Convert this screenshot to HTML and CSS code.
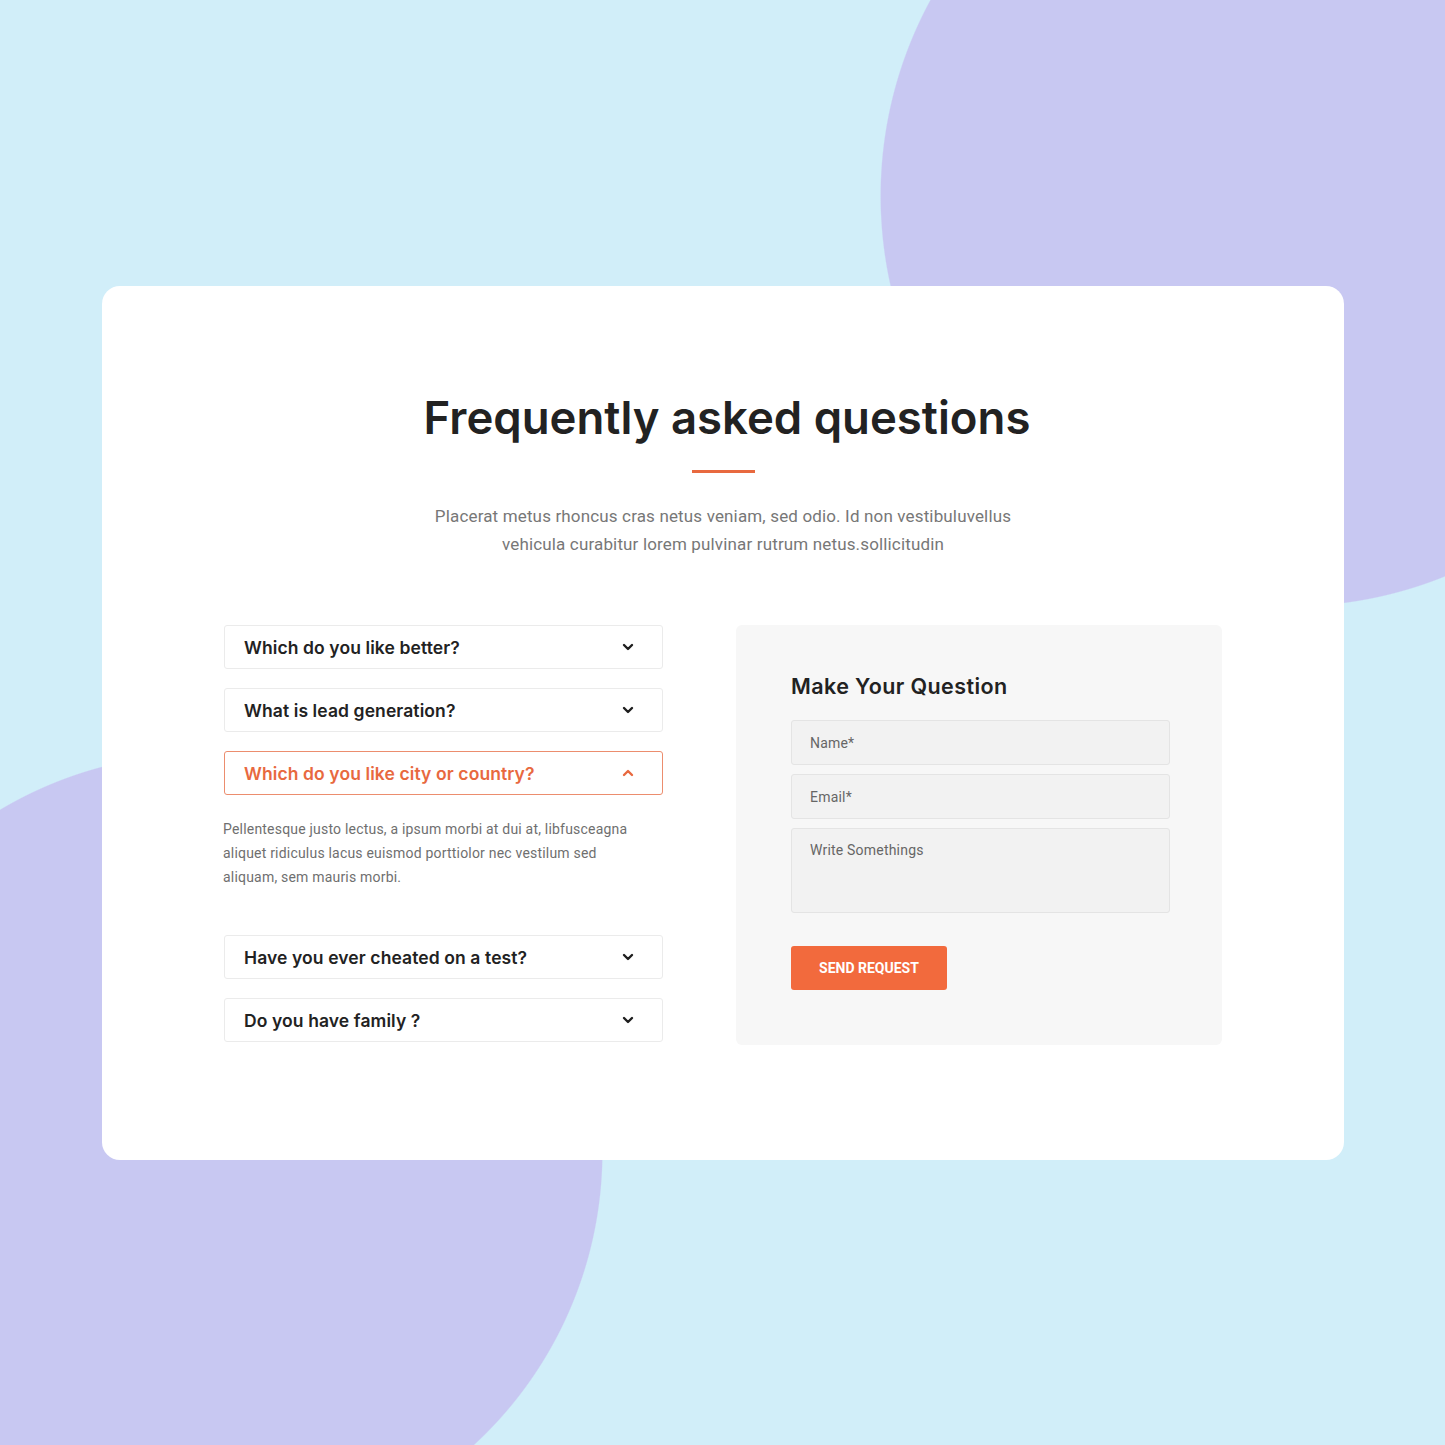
FILE: index.html
```html
<!DOCTYPE html>
<html lang="en">

<head>
    <meta charset="UTF-8">
    <meta name="viewport" content="width=device-width, initial-scale=1.0">
    <title>faq</title>

    <link rel="stylesheet" href="styles.css">
</head>

<body>
    <div class="faq_card">
        <h1 class="faq_title">Frequently asked questions</h1>
        <span class="faq_line"></span>
        <p class="faq_intro">Placerat metus rhoncus cras netus veniam, sed odio. Id non vestibuluvellus<br>
            vehicula curabitur lorem pulvinar rutrum netus.sollicitudin</p>

        <div class="faq_body">
            <div class="accordion">
                <div class="acc_item">
                    <span>Which do you like better?</span>
                    <svg class="chev" width="12" height="8" viewBox="0 0 12 8">
                        <path d="M2 2l4 4 4-4" fill="none" stroke="#1e1e1e" stroke-width="2.4" stroke-linecap="round" stroke-linejoin="round" />
                    </svg>
                </div>
                <div class="acc_item">
                    <span>What is lead generation?</span>
                    <svg class="chev" width="12" height="8" viewBox="0 0 12 8">
                        <path d="M2 2l4 4 4-4" fill="none" stroke="#1e1e1e" stroke-width="2.4" stroke-linecap="round" stroke-linejoin="round" />
                    </svg>
                </div>
                <div class="acc_item active">
                    <span>Which do you like city or country?</span>
                    <svg class="chev" width="12" height="8" viewBox="0 0 12 8">
                        <path d="M2 6l4-4 4 4" fill="none" stroke="#e8693f" stroke-width="2.4" stroke-linecap="round" stroke-linejoin="round" />
                    </svg>
                </div>
                <p class="acc_answer">Pellentesque justo lectus, a ipsum morbi at dui at, libfusceagna
                    aliquet ridiculus lacus euismod porttiolor nec vestilum sed aliquam, sem mauris morbi.</p>
                <div class="acc_item">
                    <span>Have you ever cheated on a test?</span>
                    <svg class="chev" width="12" height="8" viewBox="0 0 12 8">
                        <path d="M2 2l4 4 4-4" fill="none" stroke="#1e1e1e" stroke-width="2.4" stroke-linecap="round" stroke-linejoin="round" />
                    </svg>
                </div>
                <div class="acc_item">
                    <span>Do you have family ?</span>
                    <svg class="chev" width="12" height="8" viewBox="0 0 12 8">
                        <path d="M2 2l4 4 4-4" fill="none" stroke="#1e1e1e" stroke-width="2.4" stroke-linecap="round" stroke-linejoin="round" />
                    </svg>
                </div>
            </div>

            <form class="ask_box">
                <h3 class="ask_title">Make Your Question</h3>
                <input class="field" type="text" placeholder="Name*">
                <input class="field" type="email" placeholder="Email*">
                <textarea class="field area" placeholder="Write Somethings"></textarea>
                <button type="button" class="send_btn">SEND REQUEST</button>
            </form>
        </div>
    </div>
</body>

</html>
```

FILE: styles.css
```css
* {
    margin: 0;
    padding: 0;
    box-sizing: border-box;
}

body {
    width: 100%;
    min-height: 1445px;
    padding-top: 286px;
    font-family: Roboto, "Liberation Sans", sans-serif;
    background:
        radial-gradient(circle 411px at 1291px 196px, #c8c8f2 99.7%, transparent 100%),
        radial-gradient(circle 399px at 204px 1152px, #c8c8f2 99.7%, transparent 100%),
        #d1eef9;
}

.faq_card {
    width: 1242px;
    margin-left: 102px;
    background: #fff;
    border-radius: 18px;
    padding: 104px 122px 115px;
    display: flex;
    flex-direction: column;
    align-items: center;
}

.faq_title {
    font-family: Inter, "Open Sans", sans-serif;
    font-size: 45.5px;
    font-weight: 600;
    line-height: 56px;
    color: #222;
    padding-left: 8px;
}

.faq_line {
    display: block;
    width: 63px;
    height: 3px;
    background: #e8693f;
    margin-top: 24px;
}

.faq_intro {
    margin-top: 29px;
    font-size: 17px;
    line-height: 28px;
    letter-spacing: 0.15px;
    color: #777;
    text-align: center;
}

.faq_body {
    width: 100%;
    margin-top: 67px;
    display: flex;
    gap: 73px;
    align-items: flex-start;
}

.accordion {
    width: 440px;
    display: flex;
    flex-direction: column;
    gap: 19px;
}

.acc_item {
    height: 44px;
    border: 1px solid #ebebeb;
    border-radius: 3px;
    padding: 0 28px 0 19px;
    display: flex;
    align-items: center;
    justify-content: space-between;
    font-family: Inter, "Open Sans", sans-serif;
    font-size: 17.5px;
    font-weight: 600;
    letter-spacing: 0.1px;
    color: #222;
}

.acc_item.active {
    border-color: #ec8d6e;
    color: #e8693f;
}

.acc_answer {
    font-size: 14px;
    line-height: 24px;
    letter-spacing: 0.2px;
    color: #6f6f6f;
    width: 420px;
    margin: 3px 0 27px -1px;
}

.ask_box {
    width: 486px;
    background: #f7f7f7;
    border-radius: 6px;
    padding: 47px 52px 55px 55px;
    display: flex;
    flex-direction: column;
    gap: 9px;
}

.ask_title {
    font-family: Inter, "Open Sans", sans-serif;
    font-size: 21.5px;
    font-weight: 600;
    line-height: 28px;
    letter-spacing: 0.4px;
    color: #222;
    margin-bottom: 11px;
}

.field {
    width: 379px;
    height: 45px;
    background: #f2f2f2;
    border: 1px solid #e4e4e4;
    border-radius: 3px;
    padding: 0 18px;
    font-family: Roboto, "Liberation Sans", sans-serif;
    font-size: 14px;
    letter-spacing: 0.2px;
    color: #555;
    outline: none;
}

.field::placeholder {
    color: #666;
}

.area {
    height: 85px;
    padding-top: 13px;
    resize: none;
}

.send_btn {
    margin-top: 24px;
    width: 156px;
    height: 44px;
    background: #f26a3d;
    border: none;
    border-radius: 3px;
    color: #fff;
    font-family: Roboto, "Liberation Sans", sans-serif;
    font-size: 14px;
    font-weight: 700;
    cursor: pointer;
}
```
